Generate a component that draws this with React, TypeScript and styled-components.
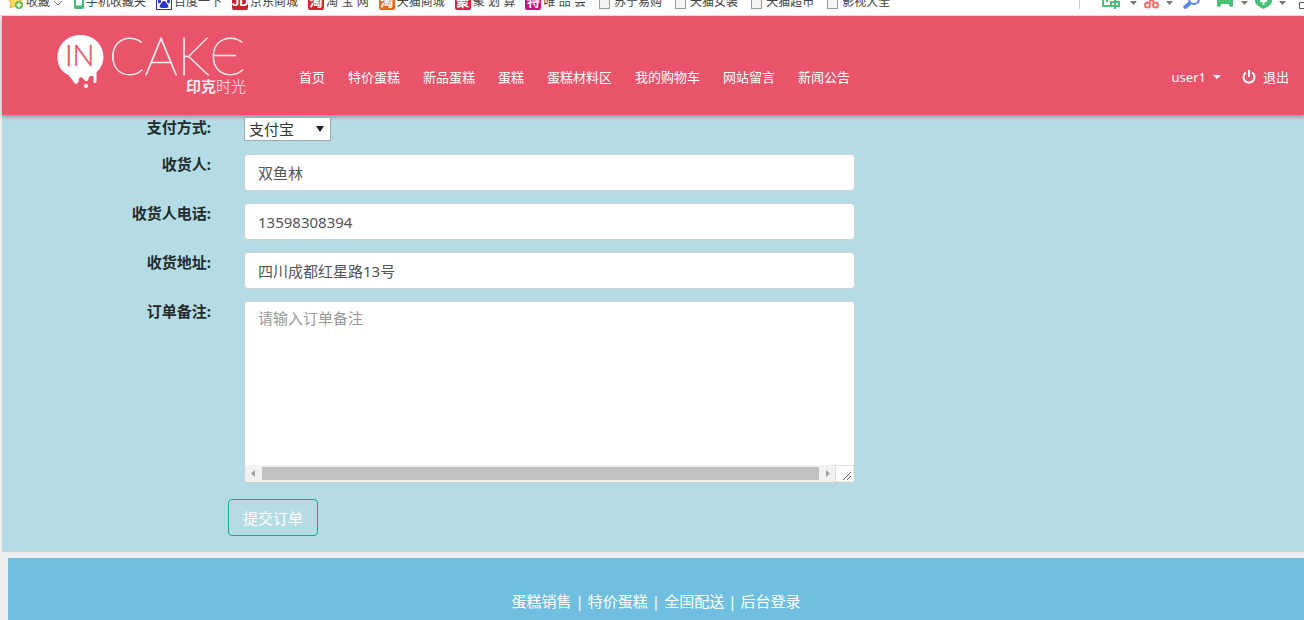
import React from "react";
import styled, { createGlobalStyle } from "styled-components";

const GlobalStyle = createGlobalStyle`
  *, *::before, *::after { box-sizing: border-box; }
  body {
    margin: 0;
    background: #ededed;
    color: #2c3e50;
    font-family: "Noto Sans", "Noto Sans CJK SC", sans-serif;
    font-size: 15px;
    line-height: 20px;
  }
`;

const BookmarkBar = styled.div`
  display: flex;
  align-items: flex-end;
  justify-content: space-between;
  height: 16px;
  padding-left: 8px;
  overflow: hidden;
  background: #fff;
  border-bottom: 1px solid #f3dfe2;
  color: #444;
  font-family: "Liberation Sans", "Noto Sans CJK SC", sans-serif;
  font-size: 12px;
  line-height: 16px;
  white-space: nowrap;
`;

const BookmarkList = styled.div`
  display: flex;
  gap: 10px;
  padding-bottom: 5px;
`;

const Bookmark = styled.a`
  display: flex;
  align-items: center;
  gap: 2px;
  color: inherit;
  text-decoration: none;
  svg { display: block; }
`;

const Tile = styled.span<{ $color: string }>`
  width: 16px;
  height: 16px;
  overflow: hidden;
  border-radius: 2px;
  background: ${(p) => p.$color};
  color: #fff;
  font-size: 13px;
  font-weight: 700;
  line-height: 15px;
  text-align: center;
`;

const EmptyTile = styled.span`
  width: 11px;
  height: 14px;
  margin: 0 2px 0 3px;
  border: 1px solid #999;
  background: #f4f4f4;
`;

const Tools = styled.div`
  display: flex;
  align-items: flex-end;
  gap: 7px;
  padding-bottom: 6px;
  svg { display: block; }
`;

const Divider = styled.span`
  width: 1px;
  height: 16px;
  margin-right: 15px;
  background: #ccc;
`;

const SearchIcon = styled.svg`
  margin: 0 9px 0 3px;
`;

const WindowIcon = styled.svg`
  margin-left: 4px;
`;

const Page = styled.div`
  margin-left: 2px;
`;

const Header = styled.header`
  position: relative;
  display: flex;
  align-items: center;
  min-height: 99px;
  padding: 0 15px 0 54px;
  background: #e9546b;
  box-shadow: 0 2px 4px rgba(0, 0, 0, 0.3);
  font-size: 13px;
`;

const Brand = styled.a`
  display: block;
  width: 192px;
  height: 64px;
  svg { display: block; }
`;

const Menu = styled.nav`
  display: flex;
  gap: 23px;
  margin-left: 51px;
  padding-top: 22px;
`;

const Account = styled.nav`
  display: flex;
  gap: 21px;
  margin-left: auto;
  padding-top: 22px;
`;

const NavLink = styled.a`
  display: flex;
  align-items: center;
  gap: 7px;
  color: #fff;
  text-decoration: none;
  white-space: nowrap;
`;

const Form = styled.form`
  padding: 2px 0 16px;
  background: #b5dce4;
`;

const Row = styled.div<{ $space?: number }>`
  display: grid;
  grid-template-columns: 209fr 611fr 449fr;
  column-gap: 33px;
  margin-bottom: ${(p) => p.$space ?? 12}px;
  margin-right: -33px;
  align-items: start;
`;

const Label = styled.label`
  color: #222b2e;
  font-weight: 700;
  text-align: right;
`;

const PaySelect = styled.div`
  position: relative;
  width: 87px;
  height: 24px;
  &::after {
    content: "";
    position: absolute;
    right: 7px;
    top: 9px;
    border: 4px solid transparent;
    border-top: 6px solid #222;
    border-bottom: 0;
    pointer-events: none;
  }
`;

const Select = styled.select`
  width: 100%;
  height: 24px;
  padding: 0 4px;
  appearance: none;
  border: 1px solid #a3a9ac;
  border-radius: 0;
  background: #fff;
  color: #333;
  font: inherit;
`;

const Input = styled.input`
  width: 100%;
  height: 37px;
  padding: 0 13px;
  border: 1px solid #ccd2d4;
  border-radius: 4px;
  background: #fff;
  color: #555;
  font: inherit;
`;

const NoteBox = styled.div`
  overflow: hidden;
  border: 1px solid #ccd2d4;
  border-radius: 4px;
  background: #fff;
`;

const Textarea = styled.textarea`
  display: block;
  width: 100%;
  height: 163px;
  padding: 6px 13px;
  border: 0;
  resize: none;
  overflow: hidden;
  color: #555;
  font: inherit;
  &::placeholder { color: #999; opacity: 1; }
`;

const ScrollTrack = styled.div`
  display: flex;
  align-items: center;
  height: 17px;
  background: #f1f1f1;
  svg { display: block; flex: none; }
`;

const ScrollThumb = styled.div`
  flex: 1;
  height: 13px;
  background: #c1c1c1;
`;

const Actions = styled.div`
  display: grid;
  grid-template-columns: 209fr 1076fr;
  column-gap: 17px;
  margin-top: 16px;
`;

const Submit = styled.button`
  grid-column: 2;
  justify-self: start;
  height: 37px;
  padding: 0 14px;
  border: 1px solid #18a98f;
  border-radius: 4px;
  background: transparent;
  color: #fff;
  font: inherit;
`;

const Footer = styled.footer`
  display: flex;
  justify-content: center;
  gap: 4px;
  margin: 6px 0 0 6px;
  padding: 33px 0 9px;
  background: #70bfe0;
  color: #fff;
`;

const FooterLink = styled.a`
  color: inherit;
  text-decoration: none;
`;

const Arrow = () => (
  <svg width="7" height="16" viewBox="0 0 7 16" aria-hidden="true">
    <path d="M0 8h7L3.500 12z" fill="#777" />
  </svg>
);

const bookmarks = [
  { name: "京东商城", mark: "JD", color: "#c5202d" },
  { name: "淘 宝 网", mark: "淘", color: "#d9252e" },
  { name: "天猫商城", mark: "淘", color: "#ee6422" },
  { name: "聚 划 算", mark: "聚", color: "#d91f45" },
  { name: "唯 品 会", mark: "特", color: "#c8107f" },
  { name: "苏宁易购" },
  { name: "天猫女装" },
  { name: "天猫超市" },
  { name: "影视大全" },
];

const menu = ["首页", "特价蛋糕", "新品蛋糕", "蛋糕", "蛋糕材料区", "我的购物车", "网站留言", "新闻公告"];
const footerLinks = ["蛋糕销售", "特价蛋糕", "全国配送", "后台登录"];

const Logo = () => (
  <svg width="192" height="64" viewBox="0 0 192 64" role="img" aria-label="IN CAKE">
    <path
      d="M24.500 1C11 1 1.500 11 1.500 23c0 9 4 15 11 18l6 8c2 2 4 0 4-2 0-4 3-5 5-2l1 1c1 2 4 1 4-1 0-3 3-4 5-3v5c0 3 3 3 3 0V38c4-3 7-9 7-15C47.500 11 38 1 24.500 1z"
      fill="#fff"
    />
    <circle cx="30" cy="52" r="2" fill="#fff" />
    <text x="9" y="32" fill="#e9546b" fontFamily="Lato" fontWeight="300" fontSize="29" stroke="#e9546b" strokeWidth="0.400">IN</text>
    <text x="53" y="41" fill="#ffe9ec" fontFamily="Lato" fontWeight="100" fontSize="52" stroke="#ffe9ec" strokeWidth="0.800">CAKЄ</text>
    <text x="130" y="58" fill="#ffe9ec" fontFamily="Noto Sans CJK SC" fontSize="15">
      <tspan fontWeight="700">印克</tspan>
      <tspan fontWeight="300">时光</tspan>
    </text>
  </svg>
);

export default function App() {
  return (
    <>
      <GlobalStyle />
      <BookmarkBar>
        <BookmarkList>
          <Bookmark href="#">
            <svg width="16" height="16" viewBox="0 0 16 16" aria-hidden="true">
              <path d="M7 0l2 5 5 1-4 3 1 5-4-2-5 2 1-5-3-4 5-1z" fill="#ffd95a" stroke="#e3b341" />
              <circle cx="11" cy="11" r="4" fill="#5dbb4d" />
              <path d="M11 8.500v5M8.500 11h5" stroke="#fff" strokeWidth="1.500" />
            </svg>
            收藏
            <svg width="12" height="16" viewBox="3 0 12 16" aria-hidden="true">
              <path d="M5 7l4 4 4-4" fill="none" stroke="#777" />
            </svg>
          </Bookmark>
          <Bookmark href="#">
            <svg width="10" height="16" viewBox="0 0 10 16" aria-hidden="true">
              <rect x="1" y="1" width="8" height="13" rx="1" fill="#fff" stroke="#42b877" strokeWidth="2" />
              <path d="M1 13h8" stroke="#42b877" strokeWidth="3" />
            </svg>
            手机收藏夹
          </Bookmark>
          <Bookmark href="#">
            <svg width="16" height="16" viewBox="0 0 16 16" aria-hidden="true">
              <rect x="0.500" y="0.500" width="15" height="15" fill="#fff" stroke="#2c35c8" />
              <g fill="#2c35c8">
                <path d="M8 7c2 0 2 2 4 4 1 2 0 3-2 3H6c-2 0-3-1-2-3 2-2 2-4 4-4z" />
                <ellipse cx="3.500" cy="7.500" rx="1.500" ry="2" />
                <ellipse cx="12.500" cy="7.500" rx="1.500" ry="2" />
                <ellipse cx="6" cy="4" rx="1.500" ry="2" />
                <ellipse cx="10" cy="4" rx="1.500" ry="2" />
              </g>
            </svg>
            百度一下
          </Bookmark>
          {bookmarks.map((b) => (
            <Bookmark href="#" key={b.name}>
              {b.color ? <Tile $color={b.color}>{b.mark}</Tile> : <EmptyTile />}
              {b.name}
            </Bookmark>
          ))}
        </BookmarkList>
        <Tools>
          <Divider />
          <svg width="21" height="16" viewBox="0 0 21 16" aria-hidden="true">
            <path d="M1 0v13h8M5 5v4M8 4v3" fill="none" stroke="#47c175" strokeWidth="2" />
            <path d="M9 9h8v4H9zM13 6v10" fill="none" stroke="#47c175" strokeWidth="2" />
          </svg>
          <Arrow />
          <svg width="15" height="16" viewBox="0 0 15 16" fill="none" stroke="#f2706e" strokeWidth="2" aria-hidden="true">
            <circle cx="3.500" cy="12" r="2.500" />
            <circle cx="11.500" cy="12" r="2.500" />
            <path d="M5 10l6-10M10 10L4 0" />
          </svg>
          <Arrow />
          <SearchIcon width="17" height="16" viewBox="0 0 17 16" fill="none" stroke="#5585f5" aria-hidden="true">
            <circle cx="11" cy="6" r="5" strokeWidth="2" />
            <path d="M7 10l-6 5" strokeWidth="4" />
          </SearchIcon>
          <svg width="18" height="16" viewBox="0 0 18 16" aria-hidden="true">
            <path d="M1 2h16v11c-2 2-4 1-4-2H5c0 3-2 4-4 2z" fill="#47c175" />
          </svg>
          <Arrow />
          <svg width="17" height="16" viewBox="0 0 17 16" aria-hidden="true">
            <path d="M0 0h17v8c0 4-5 6-8.500 8C5 14 0 12 0 8z" fill="#47c175" />
            <path d="M8.500 3v9M5 8h7" stroke="#fff" strokeWidth="2" />
          </svg>
          <Arrow />
          <WindowIcon width="7" height="16" viewBox="0 0 7 16" aria-hidden="true">
            <path d="M7 9.500H2.500v6H7" fill="none" stroke="#555" />
          </WindowIcon>
        </Tools>
      </BookmarkBar>
      <Page>
        <Header>
          <Brand href="#"><Logo /></Brand>
          <Menu>
            {menu.map((m) => <NavLink href="#" key={m}>{m}</NavLink>)}
          </Menu>
          <Account>
            <NavLink href="#">
              user1
              <svg width="8" height="4" viewBox="0 0 8 4" aria-hidden="true"><path d="M0 0h8L4 4z" fill="#fff" /></svg>
            </NavLink>
            <NavLink href="#">
              <svg width="14" height="14" viewBox="0 0 14 14" fill="none" stroke="#fff" strokeWidth="2" aria-hidden="true">
                <path d="M4 2.500a5.500 5.500 0 1 0 6 0M7 0v7" />
              </svg>
              退出
            </NavLink>
          </Account>
        </Header>
        <Form onSubmit={(e) => e.preventDefault()}>
          <Row $space={13}>
            <Label htmlFor="pay">支付方式:</Label>
            <PaySelect>
              <Select id="pay"><option>支付宝</option></Select>
            </PaySelect>
          </Row>
          <Row>
            <Label htmlFor="name">收货人:</Label>
            <Input id="name" defaultValue="双鱼林" />
          </Row>
          <Row>
            <Label htmlFor="phone">收货人电话:</Label>
            <Input id="phone" defaultValue="13598308394" />
          </Row>
          <Row>
            <Label htmlFor="address">收货地址:</Label>
            <Input id="address" defaultValue="四川成都红星路13号" />
          </Row>
          <Row>
            <Label htmlFor="note">订单备注:</Label>
            <NoteBox>
              <Textarea id="note" wrap="off" placeholder="请输入订单备注" />
              <ScrollTrack aria-hidden="true">
                <svg width="17" height="17" viewBox="0 0 17 17"><path d="M10 5v7L6 8.500z" fill="#a3a3a3" /></svg>
                <ScrollThumb />
                <svg width="35" height="17" viewBox="0 0 35 17">
                  <path d="M7 5v7l4-3.500z" fill="#a3a3a3" />
                  <path d="M16.500 17V0.500H35V17z" fill="#fff" stroke="#ddd" />
                  <path d="M24 15l8-8M28 15l4-4" stroke="#666" />
                </svg>
              </ScrollTrack>
            </NoteBox>
          </Row>
          <Actions>
            <Submit type="submit">提交订单</Submit>
          </Actions>
        </Form>
        <Footer>
          {footerLinks.map((f, i) => (
            <React.Fragment key={f}>
              {i > 0 && <span>|</span>}
              <FooterLink href="#">{f}</FooterLink>
            </React.Fragment>
          ))}
        </Footer>
      </Page>
    </>
  );
}
